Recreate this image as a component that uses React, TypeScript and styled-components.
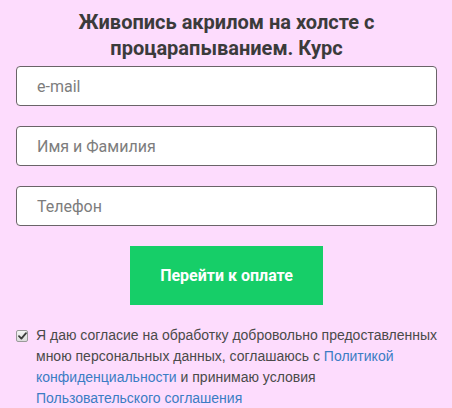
import React from "react";
import styled, { createGlobalStyle } from "styled-components";

const Global = createGlobalStyle`
  html, body { margin: 0; padding: 0; background: #fddcfd; }
  body { width: 452px; height: 408px; overflow: hidden; }
  * { box-sizing: border-box; }
`;

const Page = styled.div`
  width: 452px;
  padding: 9px 15px 0 16px;
  display: flex;
  flex-direction: column;
  align-items: stretch;
`;

const Title = styled.h1`
  margin: 0 0 5px;
  font-family: Roboto, "Liberation Sans", sans-serif;
  font-weight: 700;
  font-size: 20px;
  line-height: 26px;
  color: #3b3b3b;
  text-align: center;
`;

const Fields = styled.div`
  display: flex;
  flex-direction: column;
  gap: 20px;
`;

const Input = styled.input`
  width: 421px;
  height: 40px;
  border: 1px solid #6a6468;
  border-radius: 4px;
  background: #fff;
  padding: 0 20px;
  font-family: Roboto, "Liberation Sans", sans-serif;
  font-size: 16px;
  color: #333;
  outline: none;
  &::placeholder { color: #7d7d7d; }
`;

const ButtonRow = styled.div`
  display: flex;
  justify-content: center;
  margin-top: 20px;
`;

const PayButton = styled.button`
  width: 193px;
  height: 59px;
  border: 0;
  background: #16ce68;
  color: #fff;
  font-family: Roboto, "Liberation Sans", sans-serif;
  font-weight: 700;
  font-size: 16px;
  cursor: pointer;
`;

const Consent = styled.label`
  margin-top: 20px;
  margin-right: -3px;
  display: flex;
  align-items: flex-start;
  gap: 8px;
  font-family: "Liberation Sans", Arial, sans-serif;
  font-size: 14px;
  line-height: 21px;
  color: #4a4a4a;
`;

const HiddenCheck = styled.input`
  position: absolute;
  opacity: 0;
  width: 0;
  height: 0;
  margin: 0;
`;

const CheckBox = styled.span`
  flex: none;
  width: 12px;
  height: 12px;
  margin-top: 5px;
  border: 1px solid #9a9a9a;
  border-radius: 2px;
  background: linear-gradient(#f4f4f4, #dcdcdc);
  display: flex;
  align-items: center;
  justify-content: center;
`;

const Link = styled.a`
  color: #3b7dc4;
  text-decoration: none;
`;

export default function App() {
  return (
    <>
      <Global />
      <Page>
        <Title>
          Живопись акрилом на холсте с<br />процарапыванием. Курс
        </Title>
        <Fields>
          <Input placeholder="e-mail" />
          <Input placeholder="Имя и Фамилия" />
          <Input placeholder="Телефон" />
        </Fields>
        <ButtonRow>
          <PayButton>Перейти к оплате</PayButton>
        </ButtonRow>
        <Consent>
          <HiddenCheck type="checkbox" defaultChecked />
          <CheckBox>
            <svg width="9" height="8" viewBox="0 0 9 8">
              <path
                d="M1 4.2 L3.4 6.6 L8 1.2"
                fill="none"
                stroke="#3c3c3c"
                strokeWidth="1.8"
                strokeLinecap="round"
                strokeLinejoin="round"
              />
            </svg>
          </CheckBox>
          <span>
            Я даю согласие на обработку добровольно предоставленных мною
            персональных данных, соглашаюсь с{" "}
            <Link href="#">Политикой конфиденциальности</Link> и принимаю
            условия <Link href="#">Пользовательского соглашения</Link>
          </span>
        </Consent>
      </Page>
    </>
  );
}
